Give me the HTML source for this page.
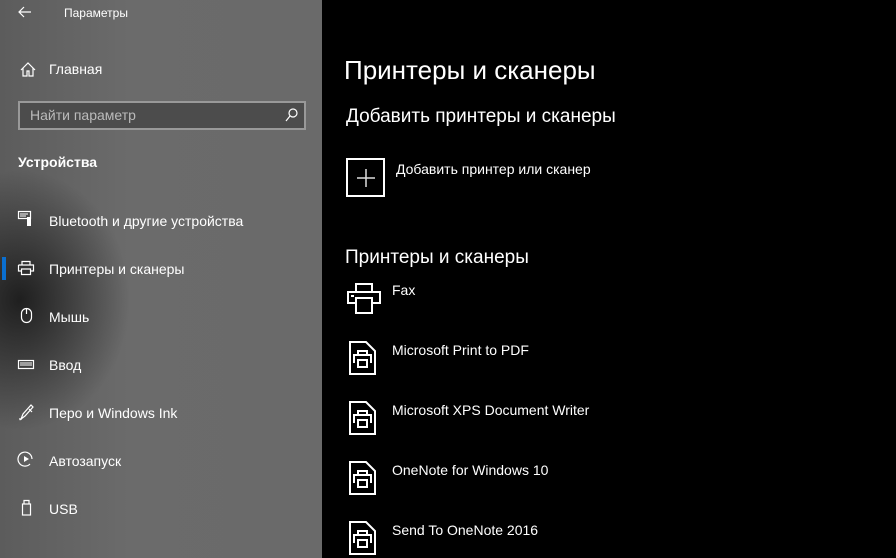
<!DOCTYPE html>
<html><head><meta charset="utf-8"><style>
*{margin:0;padding:0;box-sizing:border-box}
body{width:896px;height:558px;overflow:hidden;background:#000;font-family:"Liberation Sans",sans-serif;color:#fff;position:relative}
#side{position:absolute;left:0;top:0;width:322px;height:558px;
background:radial-gradient(ellipse 110px 130px at 20px 300px,rgba(20,20,20,0.85),rgba(20,20,20,0) 100%),linear-gradient(90deg,#5c5c5c,#6b6b6b 40%,#6a6a6a);}
.t{position:absolute;white-space:nowrap}
.nav{font-size:14px;left:49px}
svg{position:absolute;overflow:visible}
.s{fill:none;stroke:#fff;stroke-width:1.2}
.w{fill:none;stroke:#fff;stroke-width:2}
</style></head><body>
<div id="side">
<svg style="left:18px;top:6px" width="14" height="12"><path class="s" d="M13 6H1M6 1L1 6l5 5"/></svg>
<div class="t" style="left:64px;top:6px;font-size:12px">Параметры</div>
<svg style="left:20px;top:62px" width="16" height="15"><path class="s" d="M1 8L8 1l7 7M3 6v8h4v-5h2v5h4V6"/></svg>
<div class="t nav" style="top:61px">Главная</div>
<div style="position:absolute;left:18px;top:101px;width:288px;height:29px;border:2px solid #999;background:#4c4c4c"></div>
<div class="t" style="left:30px;top:107px;font-size:14px;color:#bbb">Найти параметр</div>
<svg style="left:285px;top:108px" width="13" height="14"><circle class="s" cx="8" cy="5" r="4"/><path class="s" d="M5 8L1 13"/></svg>
<div class="t" style="left:18px;top:154px;font-size:14px;font-weight:bold">Устройства</div>
<svg style="left:18px;top:211px" width="14" height="16"><rect class="s" x="0.5" y="0.5" width="12" height="7"/><rect x="9" y="6" width="4" height="9" fill="#fff"/><path stroke="#fff" d="M2 3h8M2 5h6"/></svg>
<div class="t nav" style="top:213px">Bluetooth и другие устройства</div>
<div style="position:absolute;left:2px;top:257px;width:4px;height:23px;background:#0a6fd0"></div>
<svg style="left:18px;top:261px" width="16" height="14"><path class="s" d="M4 4V0.5h8V4M0.5 4h15v6h-3M3.5 10h-3V4M3.5 8h9v5.5h-9z"/></svg>
<div class="t nav" style="top:261px">Принтеры и сканеры</div>
<svg style="left:21px;top:308px" width="11" height="16"><rect class="s" x="0.5" y="0.5" width="10" height="14" rx="5"/><path class="s" d="M5.5 1v5"/></svg>
<div class="t nav" style="top:309px">Мышь</div>
<svg style="left:18px;top:360px" width="16" height="10"><rect class="s" x="0.5" y="0.5" width="15" height="8"/><path stroke="#fff" d="M2 3h12M2 5h12"/></svg>
<div class="t nav" style="top:357px">Ввод</div>
<svg style="left:18px;top:403px" width="16" height="17"><path class="s" d="M3 16l2-5 8-9 2 2-8 9zM1 16h3M11 6l3 3"/></svg>
<div class="t nav" style="top:405px">Перо и Windows Ink</div>
<svg style="left:18px;top:451px" width="16" height="16"><path class="s" d="M12 13A7 7 0 1 1 14 8"/><path fill="#fff" d="M6 5l5 3-5 3z"/></svg>
<div class="t nav" style="top:453px">Автозапуск</div>
<svg style="left:22px;top:500px" width="10" height="16"><rect class="s" x="0.5" y="4" width="8" height="11"/><path class="s" d="M2 4V0.5h5V4"/></svg>
<div class="t nav" style="top:501px">USB</div>
</div>
<div class="t" style="left:344px;top:55px;font-size:26px">Принтеры и сканеры</div>
<div class="t" style="left:346px;top:106px;font-size:19px">Добавить принтеры и сканеры</div>
<div style="position:absolute;left:346px;top:158px;width:39px;height:39px;border:2px solid #fff"></div>
<svg style="left:357px;top:169px" width="18" height="18"><path stroke="#ddd" stroke-width="1.5" d="M9 0v18M0 9h18"/></svg>
<div class="t" style="left:396px;top:161px;font-size:14px">Добавить принтер или сканер</div>
<div class="t" style="left:345px;top:247px;font-size:19px">Принтеры и сканеры</div>
<svg style="left:347px;top:283px" width="34" height="32"><path class="w" d="M9 9V1h16v8M9 20H1V9h32v11h-8M9 15h16v15H9z"/><rect x="4" y="12" width="3" height="2" fill="#fff"/></svg>
<div class="t" style="left:392px;top:282px;font-size:14px">Fax</div>
<svg style="left:349px;top:340px" width="0" height="0"></svg>
<svg width="0" height="0" style="position:absolute"><defs></defs></svg>
<div id="docs"></div>
<svg style="left:349px;top:341px" width="28" height="34"><path class="w" d="M1 1h16l9 9v23H1z"/><path class="w" d="M9 14v-4h9v4M5 22v-8h17v8M9 19h9v7H9z"/></svg>
<div class="t" style="left:392px;top:342px;font-size:14px">Microsoft Print to PDF</div>
<svg style="left:349px;top:401px" width="28" height="34"><path class="w" d="M1 1h16l9 9v23H1z"/><path class="w" d="M9 14v-4h9v4M5 22v-8h17v8M9 19h9v7H9z"/></svg>
<div class="t" style="left:392px;top:402px;font-size:14px">Microsoft XPS Document Writer</div>
<svg style="left:349px;top:461px" width="28" height="34"><path class="w" d="M1 1h16l9 9v23H1z"/><path class="w" d="M9 14v-4h9v4M5 22v-8h17v8M9 19h9v7H9z"/></svg>
<div class="t" style="left:392px;top:462px;font-size:14px">OneNote for Windows 10</div>
<svg style="left:349px;top:521px" width="28" height="34"><path class="w" d="M1 1h16l9 9v23H1z"/><path class="w" d="M9 14v-4h9v4M5 22v-8h17v8M9 19h9v7H9z"/></svg>
<div class="t" style="left:392px;top:522px;font-size:14px">Send To OneNote 2016</div>
</body></html>
